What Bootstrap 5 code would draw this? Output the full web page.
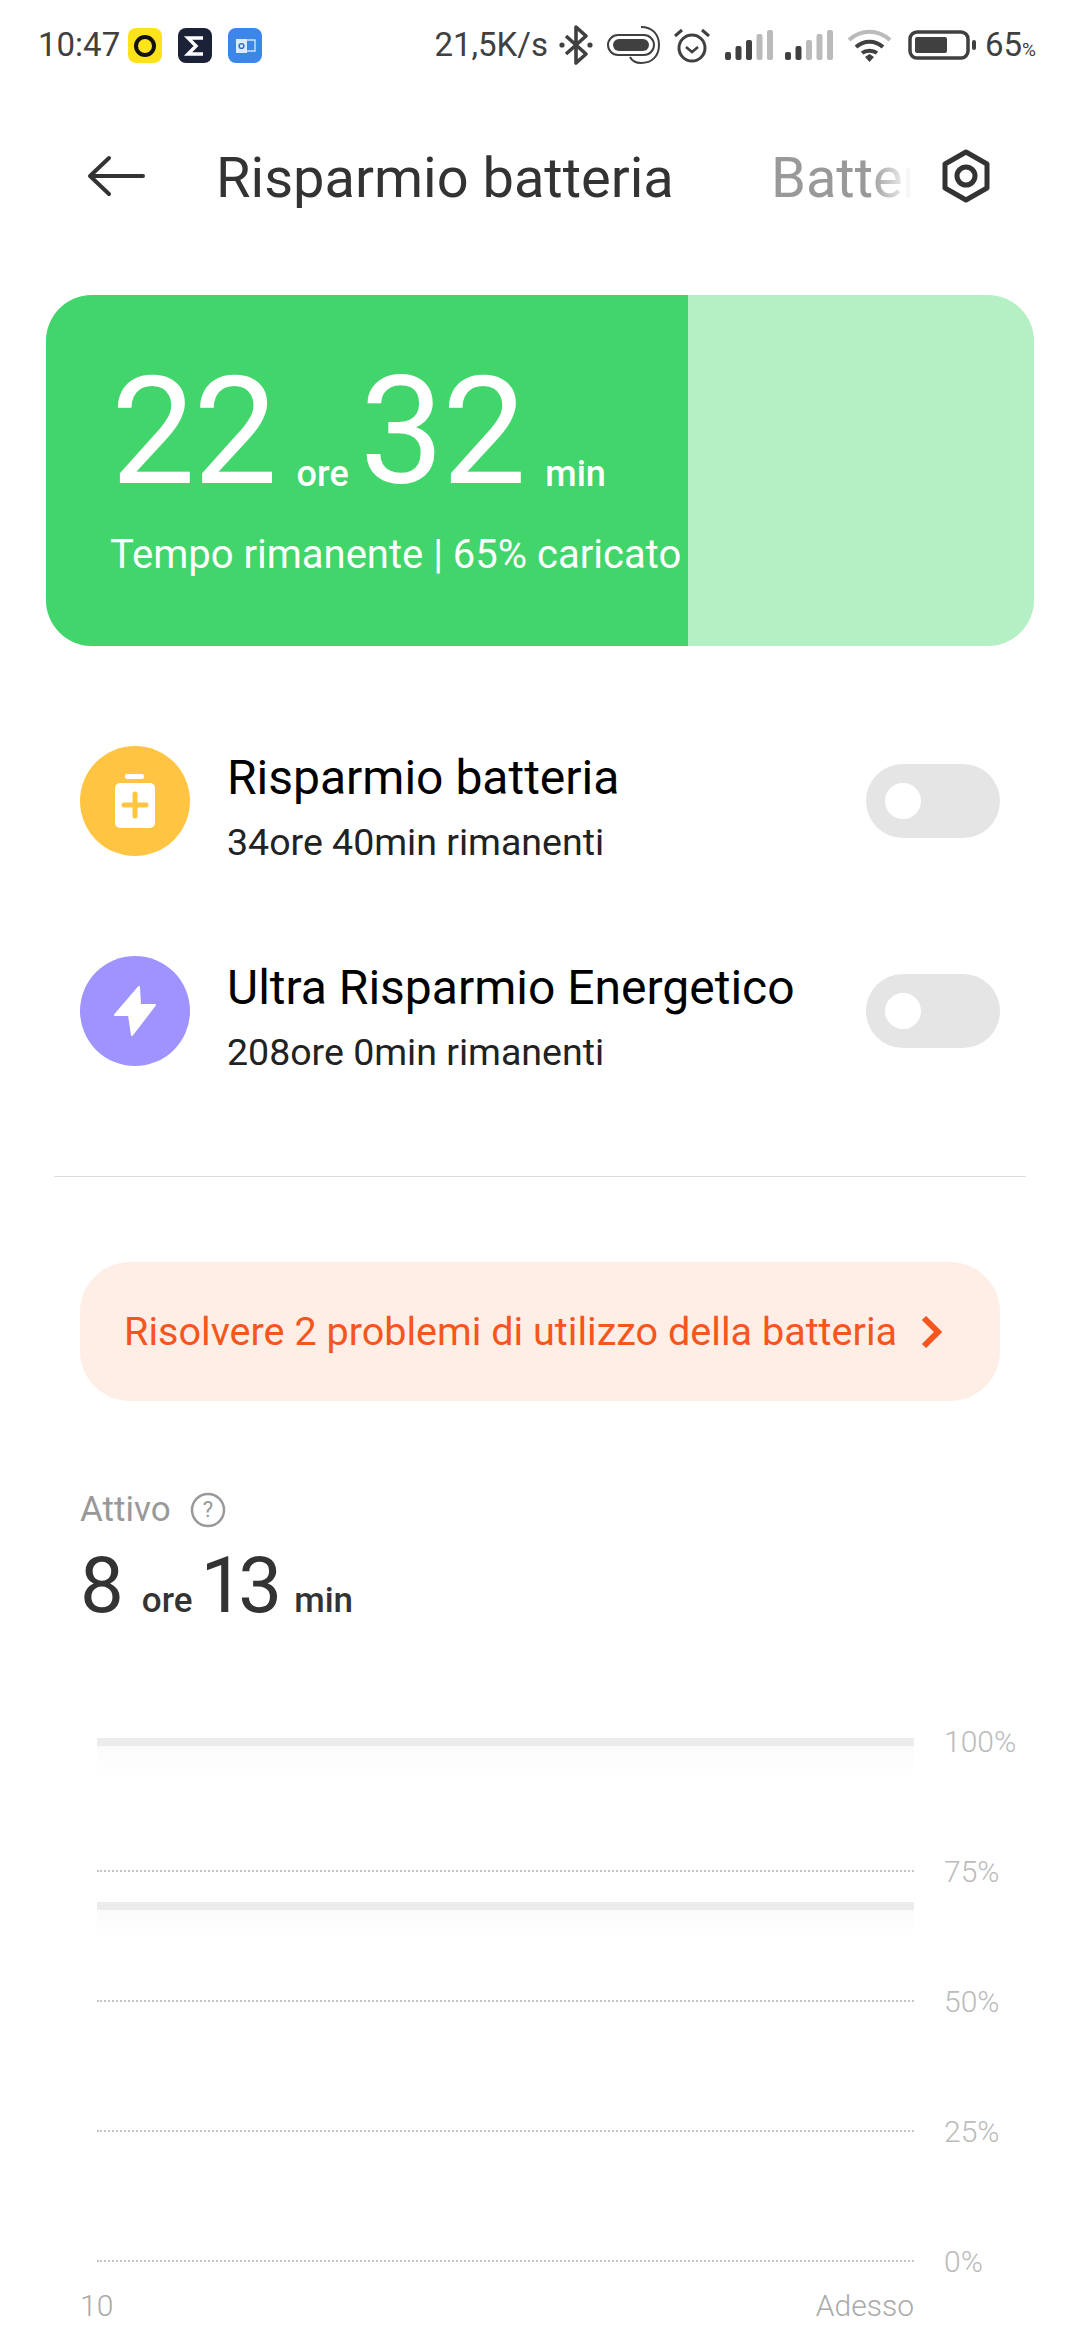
<!DOCTYPE html>
<html lang="it">
<head>
  <meta charset="UTF-8">
  <meta name="viewport" content="width=device-width, initial-scale=1">
  <title>Risparmio batteria</title>
  <link href="https://cdn.jsdelivr.net/npm/bootstrap@5.3.2/dist/css/bootstrap.min.css" rel="stylesheet">
  <style>
    html, body { width: 1080px; height: 2340px; overflow: hidden; }
    body { font-family: Roboto, "Liberation Sans", sans-serif; background: #fff; color: #333; }
    .status-bar { height: 90px; padding: 0 44px 0 38px; font-size: 33px; color: #404040; }
    .app-ico { width: 34px; height: 35px; }
    .status-right svg { display: block; flex-shrink: 0; }
    .title-bar { height: 178px; padding-left: 87px; padding-bottom: 7px; }
    .title-main { font-size: 56px; width: 470px; margin-left: 71px; padding-top: 5px; white-space: nowrap; }
    .title-next { font-size: 56px; padding-top: 5px; color: #999; width: 141px; margin-left: 85px; margin-right: 29px; overflow: hidden; white-space: nowrap;
      -webkit-mask-image: linear-gradient(to right, #000 70%, transparent 100%); mask-image: linear-gradient(to right, #000 70%, transparent 100%); }
    .batt-card { margin: 27px 46px 0; height: 351px; border-radius: 46px; background: #b5efc4; overflow: hidden; }
    .batt-fill { width: 642px; height: 100%; background: #41d56b; color: #fff; padding: 62px 0 0 65px; }
    .big-num { font-size: 150px; line-height: 150px; letter-spacing: -2px; }
    .big-unit { font-size: 36px; font-weight: 500; margin: 0 11px 0 21px; transform: translateY(3px); }
    .batt-sub { font-size: 40px; margin-top: 18px; margin-left: -1px; white-space: nowrap; }
    .mode-list { padding: 0 80px; margin-top: 100px; }
    .mode-row { height: 110px; margin-bottom: 100px; }
    .mode-ico { width: 110px; height: 110px; border-radius: 50%; }
    .mode-text { margin-left: 37px; padding-top: 13px; }
    .mode-name { font-size: 48px; color: #000; line-height: 52px; }
    .mode-sub { font-size: 37.500px; color: #222; line-height: 44px; margin-top: 16px; }
    .fake-toggle { width: 134px; height: 74px; border-radius: 37px; background: #e5e5e5; padding-left: 19px; }
    .fake-toggle span { width: 36px; height: 36px; border-radius: 50%; background: #fff; display: block; }
    .sep { margin: 110px 54px 0; height: 1px; background: #dcdcdc; }
    .warn-box { margin: 85px 80px 0; height: 139px; border-radius: 50px; background: #ffeee6; color: #f5561c; font-size: 39.600px; padding-left: 44px; }
    .active-box { padding-left: 80px; margin-top: 91px; }
    .active-label { font-size: 35px; color: #999; line-height: 34px; }
    .active-time { font-size: 78px; line-height: 90px; margin-top: 13px; color: #333; }
    .active-time small { font-size: 35px; font-weight: 500; margin: 0 8px 0 18px; }
    .active-time .tight { letter-spacing: -6px; }
    .chart { position: relative; margin: 30px 0 0 97px; width: 940px; }
    .chart-row { height: 130px; }
    .chart-line { width: 817px; border-top: 2px dotted #c4c4c4; }
    .chart-pct { font-size: 30px; color: #bbb; margin-left: 30px; font-weight: 300; }
    .chart-band { position: absolute; left: 0; width: 817px; height: 8px; background: #ececec; }
    .chart-band::after { content: ""; position: absolute; left: 0; right: 0; top: 8px; height: 30px;
      background: linear-gradient(to bottom, #fbfbfb, #fff); }
    .chart-x { width: 834px; margin: -43px 0 0 -17px; font-size: 30px; color: #aaa; font-weight: 300; }
  </style>
</head>
<body>
  <div class="status-bar d-flex align-items-center justify-content-between">
    <div class="d-flex align-items-center">
      <span>10:47</span>
      <svg class="app-ico" style="margin-left:8px" viewBox="0 0 34 35"><rect width="34" height="35" rx="8" fill="#ffe31a"/><circle cx="17" cy="18" r="9" fill="none" stroke="#111" stroke-width="4"/></svg>
      <svg class="app-ico" style="margin-left:16px" viewBox="0 0 34 35"><rect width="34" height="35" rx="8" fill="#1b2238"/><path d="M25 10H10l8 8-8 8h15" fill="none" stroke="#fff" stroke-width="3.400"/></svg>
      <svg class="app-ico" style="margin-left:16px" viewBox="0 0 34 35"><rect width="34" height="35" rx="8" fill="#3b86e8"/><rect x="8" y="11" width="11" height="14" fill="#dceafc"/><path d="M19 12h8v11h-8" fill="none" stroke="#cfe2fb" stroke-width="1.400"/><circle cx="13.500" cy="18" r="2.400" fill="none" stroke="#2a6cc4" stroke-width="1.400"/></svg>
    </div>
    <div class="status-right d-flex align-items-center">
      <span>21,5K/s</span>
      <svg style="margin-left:11px" width="34" height="40" viewBox="0 0 34 40"><path d="M7 11l20 18-10 9V2l10 9L7 29" fill="none" stroke="#404040" stroke-width="3.600" stroke-linejoin="round"/><circle cx="3" cy="20" r="2.600" fill="#404040"/><circle cx="31" cy="20" r="2.600" fill="#404040"/></svg>
      <svg style="margin-left:14px" width="53" height="38" viewBox="0 0 53 38"><rect x="1" y="9" width="46" height="20" rx="10" fill="none" stroke="#404040" stroke-width="2"/><rect x="6" y="13" width="36" height="12" rx="6" fill="#404040"/><path d="M34 1c11 0 18 7 18 18s-7 18-18 18c-5 0-9-2-11-6" fill="none" stroke="#404040" stroke-width="2"/></svg>
      <svg style="margin-left:12px" width="40" height="36" viewBox="0 0 40 36"><circle cx="20" cy="21" r="13" fill="none" stroke="#404040" stroke-width="3"/><path d="M14 20l6 5 6-5" fill="none" stroke="#404040" stroke-width="2.600"/><path d="M3 9l7-6M37 9l-7-6" stroke="#404040" stroke-width="3"/></svg>
      <svg style="margin-left:13px" width="48" height="30" viewBox="0 0 48 30"><rect x="0" y="22" width="6" height="8" rx="2" fill="#404040"/><rect x="10.500" y="16" width="6" height="14" rx="2" fill="#404040"/><rect x="21" y="10" width="6" height="20" rx="2" fill="#404040"/><rect x="31.500" y="4" width="6" height="26" rx="2" fill="#bbb"/><rect x="42" y="0" width="6" height="30" rx="2" fill="#bbb"/></svg>
      <svg style="margin-left:12px" width="48" height="30" viewBox="0 0 48 30"><rect x="0" y="22" width="6" height="8" rx="2" fill="#404040"/><rect x="10.500" y="16" width="6" height="14" rx="2" fill="#404040"/><rect x="21" y="10" width="6" height="20" rx="2" fill="#bbb"/><rect x="31.500" y="4" width="6" height="26" rx="2" fill="#bbb"/><rect x="42" y="0" width="6" height="30" rx="2" fill="#bbb"/></svg>
      <svg style="margin-left:14px" width="45" height="34" viewBox="0 0 45 34"><path d="M2 12c12-11 29-11 41 0" fill="none" stroke="#bbb" stroke-width="4"/><path d="M9 19c8-7 19-7 27 0" fill="none" stroke="#404040" stroke-width="4"/><path d="M15 25c4-3 11-3 15 0" fill="none" stroke="#404040" stroke-width="4"/><path d="M18 29l4.500-3 4.500 3-4.500 5z" fill="#404040"/></svg>
      <svg style="margin-left:16px" width="68" height="30" viewBox="0 0 68 30"><rect x="2" y="2" width="58" height="26" rx="7" fill="none" stroke="#404040" stroke-width="3.500"/><rect x="7" y="7" width="32" height="16" rx="2" fill="#404040"/><rect x="64" y="10" width="4" height="10" rx="2" fill="#404040"/></svg>
      <span style="margin-left:9px">65<span style="font-size:19px">%</span></span>
    </div>
  </div>

  <div class="title-bar d-flex align-items-center">
    <svg width="58" height="42" viewBox="0 0 58 42"><path d="M56 21H4M22 3L3 21l19 18" fill="none" stroke="#333" stroke-width="4" stroke-linecap="round" stroke-linejoin="round"/></svg>
    <div class="title-main">Risparmio batteria</div>
    <div class="title-next">Batteria</div>
    <svg width="50" height="54" viewBox="0 0 50 54"><path d="M25 3l21 12v24L25 51 4 39V15z" fill="none" stroke="#333" stroke-width="5" stroke-linejoin="round"/><circle cx="25" cy="27" r="9" fill="none" stroke="#333" stroke-width="5"/></svg>
  </div>

  <div class="batt-card">
    <div class="batt-fill">
      <div class="d-flex align-items-baseline">
        <span class="big-num">22</span><span class="big-unit">ore</span><span class="big-num">32</span><span class="big-unit">min</span>
      </div>
      <div class="batt-sub">Tempo rimanente | 65% caricato</div>
    </div>
  </div>

  <div class="mode-list">
    <div class="mode-row d-flex align-items-center">
      <div class="mode-ico d-flex align-items-center justify-content-center flex-shrink-0" style="background:#ffc542">
        <svg width="42" height="54" viewBox="0 0 42 54"><rect x="11" y="0" width="19" height="5" rx="2" fill="#fff"/><rect x="1" y="9" width="40" height="45" rx="5" fill="#fff"/><path d="M21 20v22M10 31h22" stroke="#ffc542" stroke-width="5" stroke-linecap="round"/></svg>
      </div>
      <div class="mode-text flex-grow-1">
        <div class="mode-name">Risparmio batteria</div>
        <div class="mode-sub">34ore 40min rimanenti</div>
      </div>
      <div class="fake-toggle d-flex align-items-center"><span></span></div>
    </div>
    <div class="mode-row d-flex align-items-center">
      <div class="mode-ico d-flex align-items-center justify-content-center flex-shrink-0" style="background:#9f94ff">
        <svg width="44" height="52" viewBox="0 0 44 52"><path d="M26 2L2 30h14l3 20 23-30H27z" fill="#fff" stroke="#fff" stroke-width="2" stroke-linejoin="round"/></svg>
      </div>
      <div class="mode-text flex-grow-1">
        <div class="mode-name">Ultra Risparmio Energetico</div>
        <div class="mode-sub">208ore 0min rimanenti</div>
      </div>
      <div class="fake-toggle d-flex align-items-center"><span></span></div>
    </div>
  </div>

  <div class="sep"></div>

  <div class="warn-box d-flex align-items-center">
    <span>Risolvere 2 problemi di utilizzo della batteria</span>
    <svg class="ms-4" width="22" height="34" viewBox="0 0 22 34"><path d="M3 3l14 14L3 31" fill="none" stroke="#f5561c" stroke-width="6"/></svg>
  </div>

  <div class="active-box">
    <div class="active-label d-flex align-items-center">
      Attivo
      <svg style="margin-left:19px" width="36" height="36" viewBox="0 0 36 36"><circle cx="18" cy="18" r="16" fill="none" stroke="#999" stroke-width="2.500"/><text x="18" y="25" text-anchor="middle" font-size="22" fill="#999" font-family="Roboto">?</text></svg>
    </div>
    <div class="active-time">8<small>ore</small><span class="tight">13</span><small>min</small></div>
  </div>

  <div class="chart">
    <div class="chart-band" style="top:62px"></div>
    <div class="chart-band" style="top:226px"></div>
    <div class="chart-row d-flex align-items-center"><div class="chart-line invisible"></div><div class="chart-pct">100%</div></div>
    <div class="chart-row d-flex align-items-center"><div class="chart-line"></div><div class="chart-pct">75%</div></div>
    <div class="chart-row d-flex align-items-center"><div class="chart-line"></div><div class="chart-pct">50%</div></div>
    <div class="chart-row d-flex align-items-center"><div class="chart-line"></div><div class="chart-pct">25%</div></div>
    <div class="chart-row d-flex align-items-center"><div class="chart-line"></div><div class="chart-pct">0%</div></div>
    <div class="chart-x d-flex justify-content-between"><span>10</span><span>Adesso</span></div>
  </div>
</body>
</html>
